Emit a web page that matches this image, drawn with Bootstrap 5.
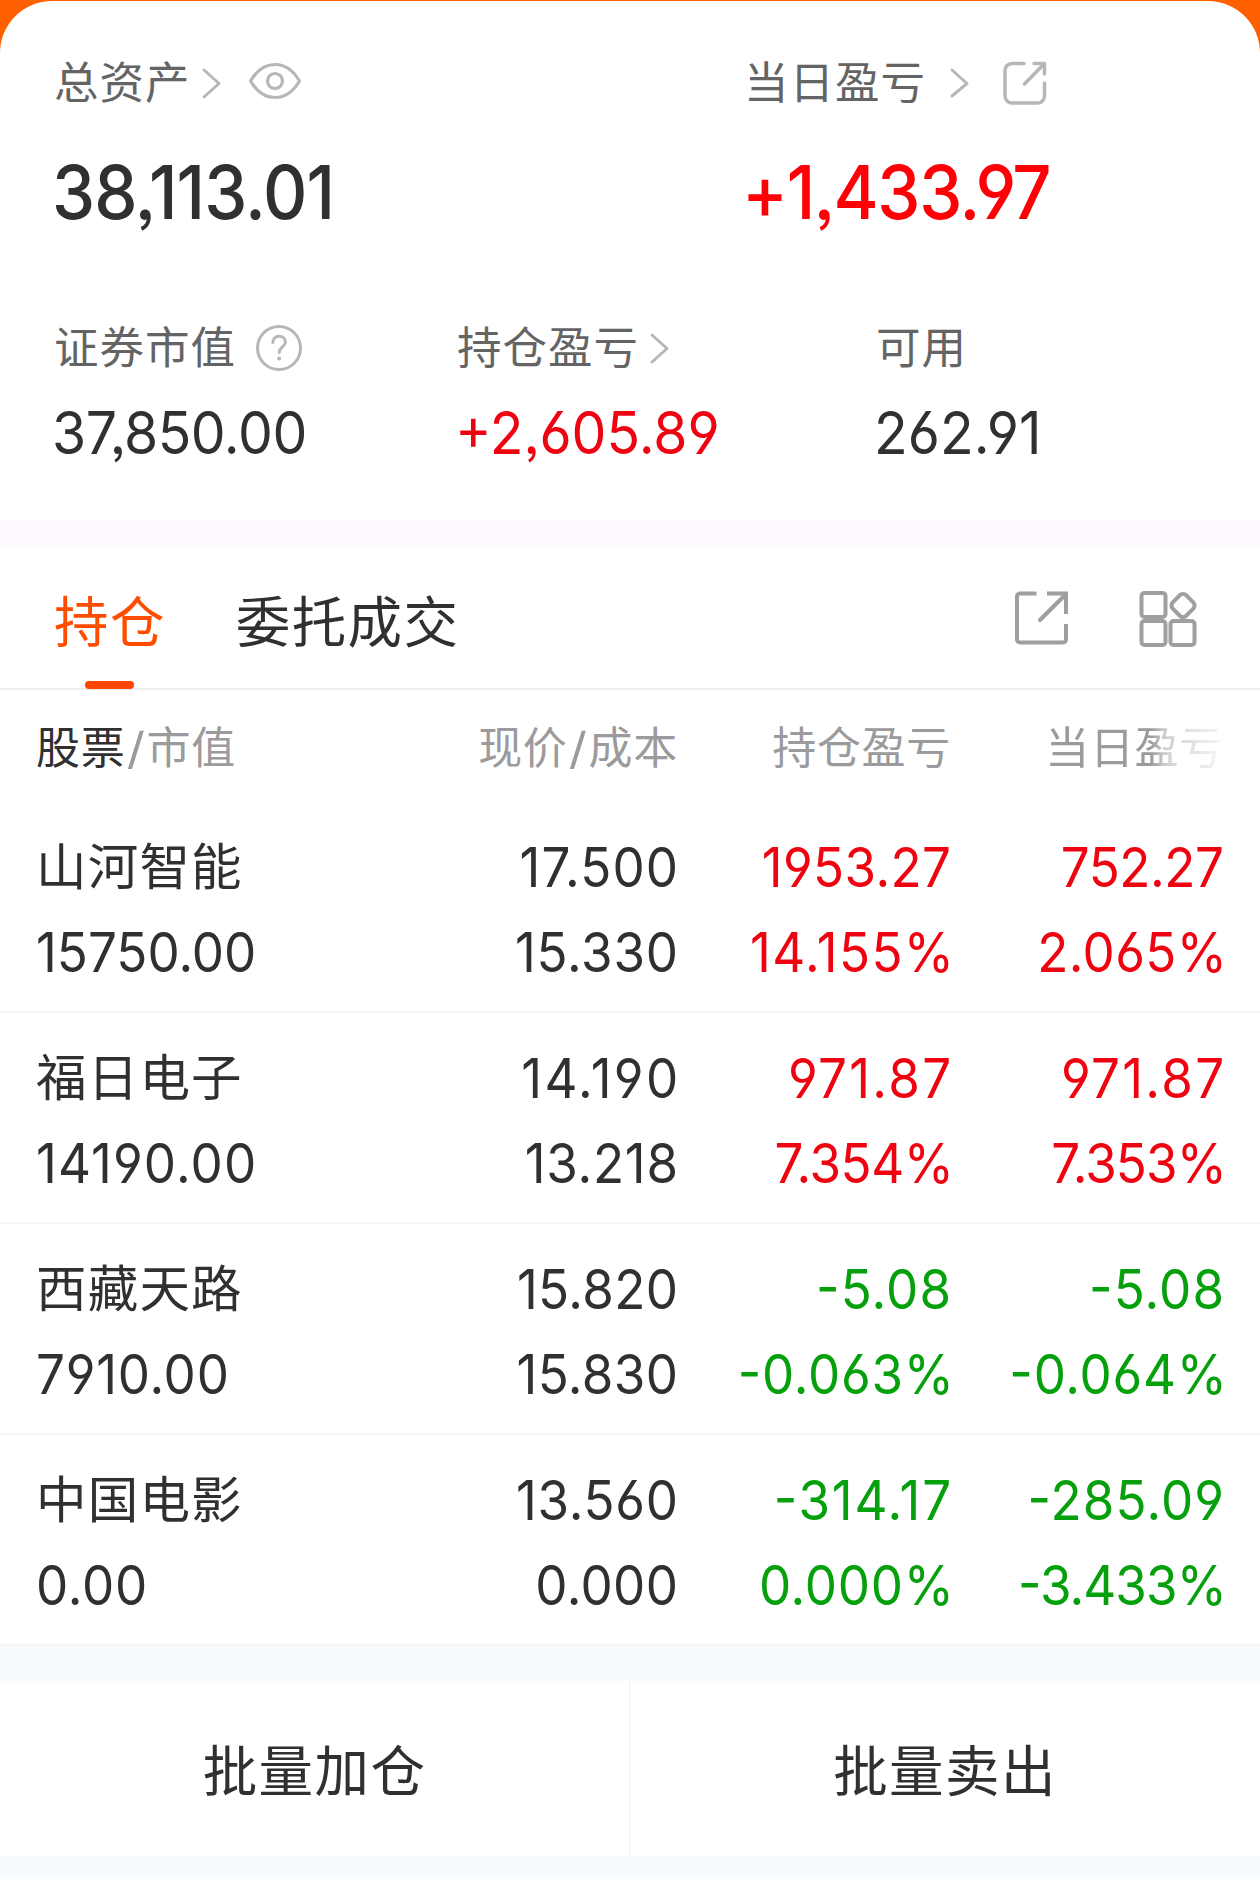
<!DOCTYPE html>
<html lang="zh-CN">
<head>
<meta charset="utf-8">
<meta name="viewport" content="width=device-width, initial-scale=1">
<title>持仓</title>
<link href="https://cdn.jsdelivr.net/npm/bootstrap@5.3.0/dist/css/bootstrap.min.css" rel="stylesheet">
<style>
  body { background: #ff6000; color: #303030; font-family: Inter, "Noto Sans CJK SC", sans-serif; }
  .app { padding-top: 1px; overflow: hidden; }
  svg { display: block; flex: none; fill: none; stroke: #b8b6b8; stroke-linecap: round; stroke-linejoin: round; }

  .summary { height: 519px; border-radius: 52px 52px 0 0; padding: 52px 0 0 54px; }
  .sum-a { width: 690px; }
  .sum-b { width: 403px; }
  .sum-c { width: 419px; }
  .lbl { height: 60px; line-height: 61px; font-size: 44.5px; letter-spacing: 1px; color: #646464; white-space: nowrap; }
  .total { line-height: 80px; margin: 39px 0 0 -2px; font-size: 74px; font-weight: 500; }
  .figures { margin-top: 86px; }
  .val { line-height: 70px; margin: 19px 0 0 -2px; font-size: 59.5px; }
  .eye { margin: -5px 0 0 25px; }
  .chev-b { margin-left: 22px; }
  .share-s { margin-left: 30px; }
  .help { margin-left: 19px; }
  .chev-c { margin-left: 9px; }

  .band { height: 28px; background: #fdf9fe; }
  .tabs { height: 142px; padding: 0 63px 0 54px; border-bottom: 2px solid #eeeeee; }
  .tab-item { position: relative; line-height: 148px; height: 140px; font-size: 54.5px; letter-spacing: 1.4px; margin-right: 70px; }
  .tab-on { color: #ff4d00; }
  .tab-on::after { content: ""; position: absolute; left: 31px; bottom: -1px; width: 49px; height: 8px; border-radius: 4px; background: #ff4400; }
  .tools { gap: 68px; margin-top: 1px; }
  .tools svg { stroke: #a09ea0; }

  .line-row { padding: 0 36px; }
  .c2 { width: 300px; }
  .c3 { width: 273px; }
  .heads { height: 112px; line-height: 117px; font-size: 44px; letter-spacing: .7px; color: #9b9a9c; }
  .ink { color: #303030; }
  .slash { display: inline-block; margin: 0 1px 0 1.5px; transform: scaleX(1.15); padding: 0 1px; }
  .fade-end { -webkit-mask-image: linear-gradient(90deg, #000 0, #000 200px, rgba(0,0,0,.45) 215px, rgba(0,0,0,.08) 273px); mask-image: linear-gradient(90deg, #000 0, #000 200px, rgba(0,0,0,.45) 215px, rgba(0,0,0,.08) 273px); }
  .holding { height: 211px; padding-top: 23px; line-height: 84.5px; font-size: 55px; border-bottom: 2px solid #f5f5f5; }
  .holding .num { font-feature-settings: "cv03", "cv04", "ss03", "case"; }
  .stock { font-size: 50.5px; letter-spacing: 1.2px; }
  .up { color: #ee0410; }
  .up-strong { color: #fe0006; }
  .down { color: #06a00d; }

  /* condensed figures; the negative margin keeps right-aligned figures flush */
  .num { --k: .8px; --e: 0px; font-feature-settings: "cv03", "cv04", "ss03"; white-space: nowrap; letter-spacing: var(--k); transform: scaleX(.93); transform-origin: left; }
  .text-end .num { margin-right: calc(var(--k) * -1 - var(--e)); transform-origin: right; }
  .kn15 { --k: -1.4px; } .kn1 { --k: -1px; } .kn05 { --k: -.5px; } .k0 { --k: 0px; } .k04 { --k: .4px; }
  .k12 { --k: 1.2px; } .k15 { --k: 1.5px; } .k2 { --k: 1.9px; } .k25 { --k: 2.5px; }
  .pct { --e: 3px; }

  .band-blue { height: 35px; background: #f5fbff; }
  .actions { height: 175px; }
  .act { line-height: 180px; font-size: 54.5px; letter-spacing: 1.4px; color: #303030; background: #fff; border: 0; padding: 0; }
  .act:first-child { border-right: 1px solid #eee; }
  .foot { height: 23px; background: #f5fbff; }
</style>
</head>
<body>
<main class="app">
  <section class="summary bg-white">
    <div class="d-flex">
      <div class="sum-a">
        <div class="lbl d-flex align-items-center">总资产
          <svg class="ms-2" width="24" height="34" viewBox="0 0 24 34" stroke-width="3"><path d="M5 4l15 13.500L5 31"/></svg>
          <svg class="eye" width="54" height="40" viewBox="0 0 54 40" stroke-width="3.200"><path d="M2.500 20C9 9 17 3.500 27 3.500S45 9 51.500 20C45 31 37 36.500 27 36.500S9 31 2.500 20z"/><circle cx="27" cy="20" r="7.500"/></svg>
        </div>
        <div class="total num kn1">38,113.01</div>
      </div>
      <div>
        <div class="lbl d-flex align-items-center">当日盈亏
          <svg class="chev-b" width="24" height="34" viewBox="0 0 24 34" stroke-width="3"><path d="M4 4l15 13.500L4 30"/></svg>
          <svg class="share-s" width="46" height="46" viewBox="0 0 46 46" stroke-width="3.500"><path d="M22 3.500H10a7 7 0 0 0-7 7V36a7 7 0 0 0 7 7H35.500a7 7 0 0 0 7-7V23M32 3.500H42.500V14M42 4L22.500 24"/></svg>
        </div>
        <div class="total num up-strong kn15">+1,433.97</div>
      </div>
    </div>
    <div class="figures d-flex">
      <div class="sum-b">
        <div class="lbl d-flex align-items-center">证券市值
          <svg class="help" width="48" height="48" viewBox="0 0 48 48" stroke-width="3"><circle cx="24" cy="24" r="21.500"/><path d="M17.800 18.500c0-3.800 2.700-6.200 6.300-6.200s6.300 2.400 6.300 5.700c0 4.700-6.200 5.100-6.200 10.500"/><circle cx="24.200" cy="34.500" r="1" fill="#b8b6b8" stroke-width="2"/></svg>
        </div>
        <div class="val num kn05">37,850.00</div>
      </div>
      <div class="sum-c">
        <div class="lbl d-flex align-items-center">持仓盈亏
          <svg class="chev-c" width="24" height="34" viewBox="0 0 24 34" stroke-width="3"><path d="M4 4l15 13.500L4 31"/></svg>
        </div>
        <div class="val num up k0">+2,605.89</div>
      </div>
      <div>
        <div class="lbl">可用</div>
        <div class="val num k0">262.91</div>
      </div>
    </div>
  </section>

  <div class="band"></div>

  <section class="bg-white">
    <nav class="tabs d-flex align-items-center">
      <div class="tab-item tab-on">持仓</div>
      <div class="tab-item">委托成交</div>
      <div class="tools d-flex ms-auto">
        <svg width="56" height="56" viewBox="0 0 56 56" stroke-width="4"><g stroke-linecap="butt"><path d="M23.500 3.500H7a3 3 0 0 0-3 3V49.500a3 3 0 0 0 3 3H50a3 3 0 0 0 3-3V34"/><path d="M34 3.500H53V24" stroke-linejoin="miter"/></g><path d="M52 5L27 30"/></svg>
        <svg width="60" height="58" viewBox="0 0 60 58" stroke-width="4"><rect x="4.500" y="3" width="24" height="24" rx="3"/><rect x="4.500" y="31" width="24" height="24" rx="3"/><rect x="33.500" y="31" width="24" height="24" rx="3"/><rect x="36.500" y="6" width="19" height="19" rx="4.500" transform="rotate(45 46 15.500)"/></svg>
      </div>
    </nav>

    <div class="line-row heads d-flex">
      <div class="flex-fill"><span class="ink">股票</span><span class="slash">/</span>市值</div>
      <div class="c2 text-end">现价<span class="slash">/</span>成本</div>
      <div class="c3 text-end">持仓盈亏</div>
      <div class="c3 text-end fade-end">当日盈亏</div>
    </div>

    <div class="line-row holding d-flex">
      <div class="flex-fill"><div class="stock">山河智能</div><div class="num k0">15750.00</div></div>
      <div class="c2 text-end"><div class="num k12">17.500</div><div class="num">15.330</div></div>
      <div class="c3 text-end up"><div class="num k04">1953.27</div><div class="num k15 pct">14.155%</div></div>
      <div class="c3 text-end up"><div class="num kn05">752.27</div><div class="num k04 pct">2.065%</div></div>
    </div>
    <div class="line-row holding d-flex">
      <div class="flex-fill"><div class="stock">福日电子</div><div class="num k12">14190.00</div></div>
      <div class="c2 text-end"><div class="num k25">14.190</div><div class="num">13.218</div></div>
      <div class="c3 text-end up"><div class="num k25">971.87</div><div class="num kn05 pct">7.354%</div></div>
      <div class="c3 text-end up"><div class="num k25">971.87</div><div class="num kn1 pct">7.353%</div></div>
    </div>
    <div class="line-row holding d-flex">
      <div class="flex-fill"><div class="stock">西藏天路</div><div class="num">7910.00</div></div>
      <div class="c2 text-end"><div class="num k04">15.820</div><div class="num k04">15.830</div></div>
      <div class="c3 text-end down"><div class="num k12">-5.08</div><div class="num pct">-0.063%</div></div>
      <div class="c3 text-end down"><div class="num k12">-5.08</div><div class="num pct">-0.064%</div></div>
    </div>
    <div class="line-row holding d-flex">
      <div class="flex-fill"><div class="stock">中国电影</div><div class="num">0.00</div></div>
      <div class="c2 text-end"><div class="num">13.560</div><div class="num k04">0.000</div></div>
      <div class="c3 text-end down"><div class="num k2">-314.17</div><div class="num pct">0.000%</div></div>
      <div class="c3 text-end down"><div class="num k12">-285.09</div><div class="num kn1 pct">-3.433%</div></div>
    </div>
  </section>

  <div class="band-blue"></div>
  <div class="actions d-flex">
    <button class="act col-6 text-center" type="button">批量加仓</button>
    <button class="act col-6 text-center" type="button">批量卖出</button>
  </div>
  <div class="foot"></div>
</main>
</body>
</html>
